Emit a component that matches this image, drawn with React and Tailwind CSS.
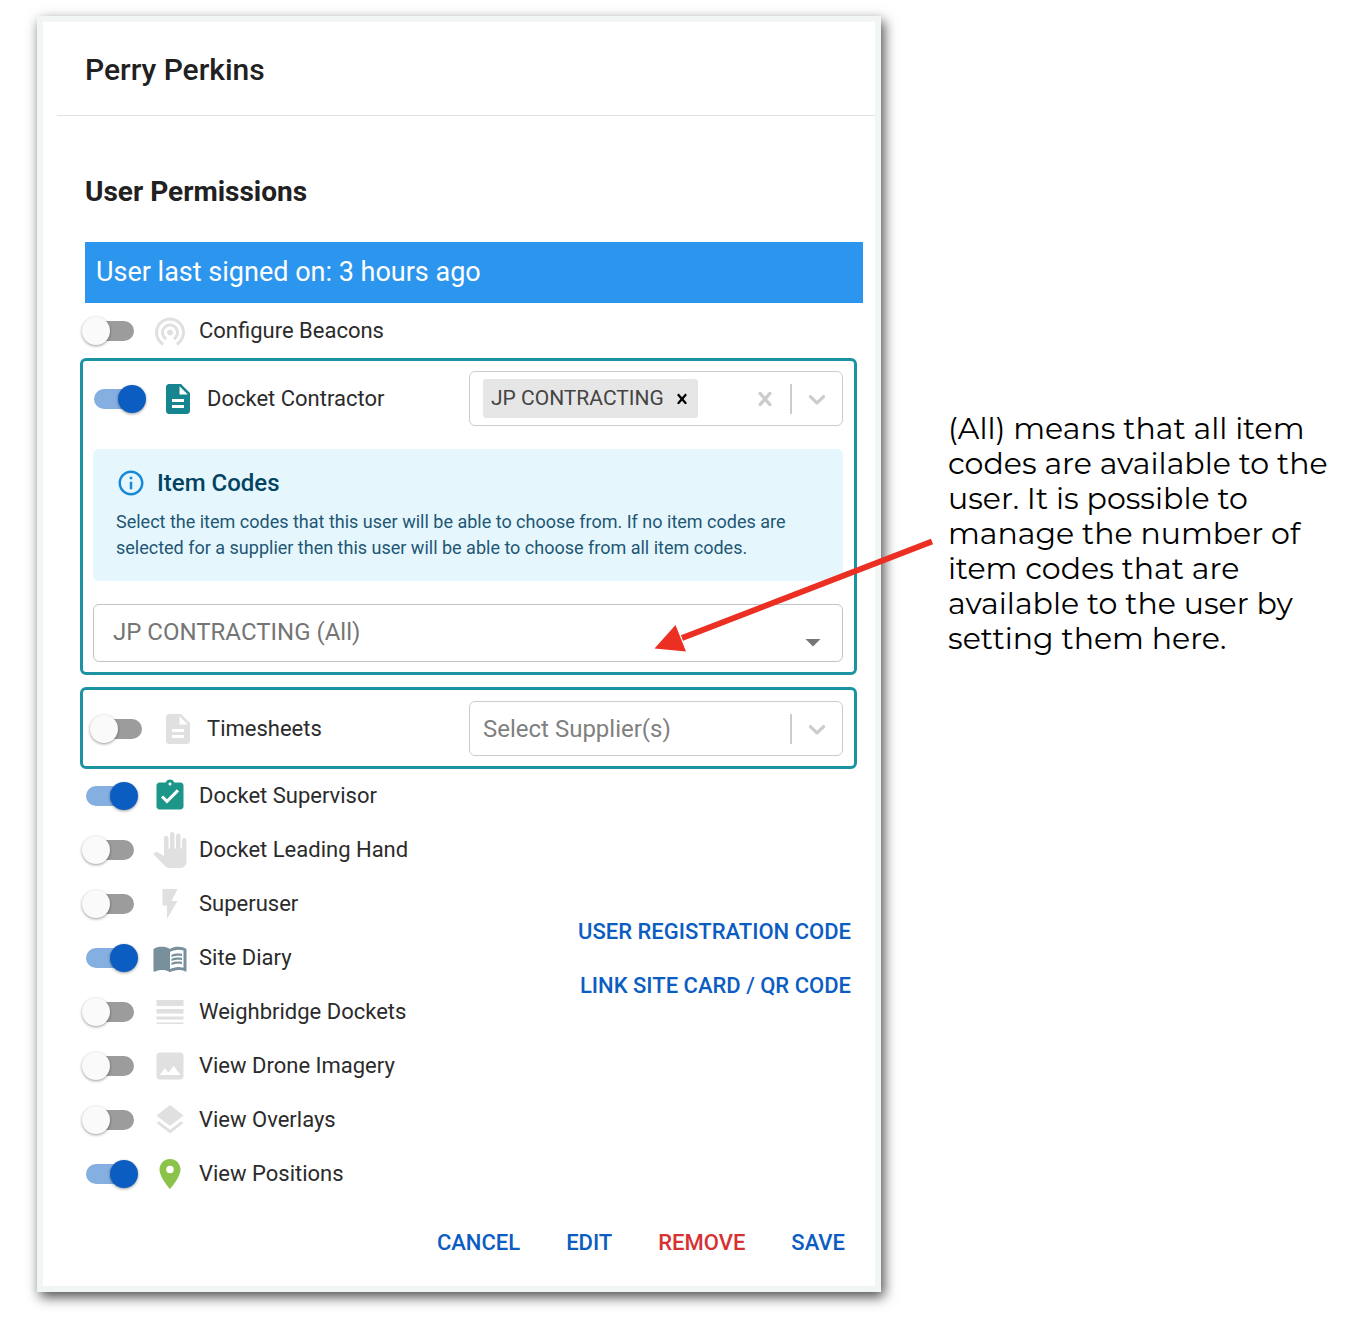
import { useState } from "react";
import {
  MdArrowDropDown,
  MdAssignmentTurnedIn,
  MdDescription,
  MdFlashOn,
  MdImage,
  MdInfoOutline,
  MdLayers,
  MdLineWeight,
  MdMenuBook,
  MdPanTool,
  MdPlace,
  MdWifiTethering,
} from "react-icons/md";

const permissions = [
  {
    id: "supervisor",
    label: "Docket Supervisor",
    icon: MdAssignmentTurnedIn,
    color: "text-[#1c9688]",
  },
  { id: "leadingHand", label: "Docket Leading Hand", icon: MdPanTool },
  { id: "superuser", label: "Superuser", icon: MdFlashOn },
  {
    id: "siteDiary",
    label: "Site Diary",
    icon: MdMenuBook,
    color: "text-[#78909c]",
  },
  { id: "weighbridge", label: "Weighbridge Dockets", icon: MdLineWeight },
  { id: "drone", label: "View Drone Imagery", icon: MdImage },
  { id: "overlays", label: "View Overlays", icon: MdLayers },
  {
    id: "positions",
    label: "View Positions",
    icon: MdPlace,
    color: "text-[#8bc34a]",
  },
];

const PermissionToggle = ({ id, label, icon: Icon, color, checked, onChange }) => (
  <div className="flex items-center">
    <input
      id={id}
      type="checkbox"
      role="switch"
      checked={checked}
      onChange={() => onChange(id)}
      className="relative h-5 w-12 shrink-0 cursor-pointer appearance-none rounded-full bg-[#9c9c9c] before:absolute before:-top-1 before:-left-1 before:size-7 before:rounded-full before:bg-[#fafafa] before:shadow-[0_1px_3px_rgba(0,0,0,0.4)] checked:bg-[#85aee1] checked:before:left-6 checked:before:bg-[#0b5dc2]"
    />
    <Icon
      className={`ml-[18px] size-9 shrink-0 ${checked && color ? color : "text-[#e0e0e0]"}`}
    />
    <label
      htmlFor={id}
      className="ml-[11px] cursor-pointer text-[22px] leading-7 whitespace-nowrap text-[#2b2b2b]"
    >
      {label}
    </label>
  </div>
);

const CrossIcon = ({ className }) => (
  <svg viewBox="0 0 20 20" fill="currentColor" className={className}>
    <path d="M14.348 14.849c-0.469 0.469-1.229 0.469-1.697 0l-2.651-3.030-2.651 3.029c-0.469 0.469-1.229 0.469-1.697 0-0.469-0.469-0.469-1.229 0-1.697l2.758-3.15-2.759-3.152c-0.469-0.469-0.469-1.228 0-1.697s1.228-0.469 1.697 0l2.652 3.031 2.651-3.031c0.469-0.469 1.228-0.469 1.697 0s0.469 1.229 0 1.697l-2.758 3.152 2.758 3.15c0.469 0.469 0.469 1.229 0 1.698z" />
  </svg>
);

const ChevronIcon = () => (
  <svg viewBox="0 0 20 20" fill="currentColor" className="size-7">
    <path d="M4.516 7.548c0.436-0.446 1.043-0.481 1.576 0l3.908 3.747 3.908-3.747c0.533-0.481 1.141-0.446 1.574 0 0.436 0.445 0.408 1.197 0 1.615-0.406 0.418-4.695 4.502-4.695 4.502-0.217 0.223-0.502 0.335-0.787 0.335s-0.57-0.112-0.789-0.335c0 0-4.287-4.084-4.695-4.502s-0.436-1.17 0-1.615z" />
  </svg>
);

const SupplierSelect = ({ label, values, onChange }) => (
  <div className="flex h-[55px] w-[374px] items-center rounded-md border border-[#cccccc] pr-[11px] pl-[13px] text-[#cccccc]">
    {values.map((value) => (
      <span
        key={value}
        className="flex h-[39px] shrink-0 items-center rounded-[3px] bg-[#e6e6e6] pl-2 text-[21px] text-[#444444]"
      >
        {value}
        <button
          type="button"
          aria-label={`Remove ${value}`}
          onClick={() => onChange(values.filter((v) => v !== value))}
          className="ml-2 pr-1.5 text-black"
        >
          <CrossIcon className="size-5" />
        </button>
      </span>
    ))}
    <input
      type="text"
      aria-label={label}
      placeholder={values.length ? "" : "Select Supplier(s)"}
      className="min-w-0 flex-1 text-2xl text-[#333333] outline-none placeholder:text-[#808080]"
    />
    {values.length > 0 && (
      <button type="button" aria-label="Clear" onClick={() => onChange([])}>
        <CrossIcon className="size-7" />
      </button>
    )}
    <span className="mx-[11px] h-[30px] w-0.5 bg-[#cccccc]" />
    <button type="button" aria-label="Open suppliers">
      <ChevronIcon />
    </button>
  </div>
);

const App = () => {
  const [enabled, setEnabled] = useState({
    contractor: true,
    supervisor: true,
    siteDiary: true,
    positions: true,
  });
  const [contractors, setContractors] = useState(["JP CONTRACTING"]);
  const [suppliers, setSuppliers] = useState([]);

  const toggle = (id) => setEnabled((prev) => ({ ...prev, [id]: !prev[id] }));

  return (
    <div className="flex items-start gap-[67px] bg-white pt-4 pr-4 pb-12 pl-[37px] font-[Roboto,sans-serif]">
      <main className="min-w-0 flex-1 border-6 border-[#f1f6f5] bg-white shadow-[3px_5px_12px_rgba(0,0,0,0.7)]">
        <header className="ml-3.5 border-b border-[#e2e2e2] pt-7 pb-[26px] pl-7">
          <h1 className="text-[30px] leading-[39px] font-medium text-[#212121]">
            Perry Perkins
          </h1>
        </header>

        <section className="pt-14">
          <h2 className="pl-[42px] text-[28px] leading-10 font-bold text-[#212121]">
            User Permissions
          </h2>
          <div className="mt-[30px] mr-3 ml-[42px] bg-[#2c96ef] px-[11px] py-3 text-[27px] leading-[37px] text-white">
            User last signed on: 3 hours ago
          </div>

          <div className="pr-[18px] pl-[37px]">
            <div className="flex h-[55px] items-center pl-1.5">
              <PermissionToggle
                id="beacons"
                label="Configure Beacons"
                icon={MdWifiTethering}
                checked={!!enabled.beacons}
                onChange={toggle}
              />
            </div>

            <div className="rounded-md border-3 border-[#1c93a3] p-2.5 pr-[11px]">
              <div className="flex items-center justify-between pl-px">
                <PermissionToggle
                  id="contractor"
                  label="Docket Contractor"
                  icon={MdDescription}
                  color="text-[#17858f]"
                  checked={!!enabled.contractor}
                  onChange={toggle}
                />
                <SupplierSelect
                  label="Docket contractors"
                  values={contractors}
                  onChange={setContractors}
                />
              </div>

              <div className="mt-[23px] rounded-md bg-[#e5f6fd] px-[23px] pt-4 pb-5">
                <div className="flex items-center gap-[11px]">
                  <MdInfoOutline className="size-[30px] text-[#1688d8]" />
                  <h3 className="text-2xl leading-9 font-medium text-[#014361]">
                    Item Codes
                  </h3>
                </div>
                <p className="mt-2 text-lg leading-[26px] text-[#1e5674]">
                  Select the item codes that this user will be able to choose
                  from. If no item codes are selected for a supplier then this
                  user will be able to choose from all item codes.
                </p>
              </div>

              <div className="relative mt-[23px]">
                <select
                  aria-label="Item codes"
                  className="block h-[58px] w-full appearance-none rounded-md border border-[#c4c4c4] pr-12 pb-0.5 pl-[19px] text-2xl text-[#757575]"
                >
                  <option>JP CONTRACTING (All)</option>
                </select>
                <MdArrowDropDown className="pointer-events-none absolute right-3 bottom-0.5 size-9 text-[#757575]" />
              </div>
            </div>

            <div className="mt-3 flex items-center justify-between rounded-md border-3 border-[#1c93a3] px-[11px] pt-[11px] pb-2.5">
              <PermissionToggle
                id="timesheets"
                label="Timesheets"
                icon={MdDescription}
                color="text-[#17858f]"
                checked={!!enabled.timesheets}
                onChange={toggle}
              />
              <SupplierSelect
                label="Timesheet suppliers"
                values={suppliers}
                onChange={setSuppliers}
              />
            </div>

            <div className="flex justify-between px-1.5">
              <ul>
                {permissions.map((permission) => (
                  <li key={permission.id} className="flex h-[54px] items-center">
                    <PermissionToggle
                      {...permission}
                      checked={!!enabled[permission.id]}
                      onChange={toggle}
                    />
                  </li>
                ))}
              </ul>
              <div className="flex flex-col items-end pt-[135px] text-[22px] font-medium text-[#0b5dc2]">
                <button type="button" className="h-[54px]">
                  USER REGISTRATION CODE
                </button>
                <button type="button" className="h-[54px]">
                  LINK SITE CARD / QR CODE
                </button>
              </div>
            </div>
          </div>
        </section>

        <footer className="flex justify-end gap-[46px] pt-6 pr-[30px] pb-[25px] text-[22px] leading-9 font-medium text-[#0b5dc2]">
          <button type="button">CANCEL</button>
          <button type="button">EDIT</button>
          <button type="button" className="text-[#d63232]">
            REMOVE
          </button>
          <button type="button">SAVE</button>
        </footer>
      </main>

      <aside className="relative mt-[395px] w-[390px] shrink-0">
        <p className="font-[Montserrat,sans-serif] text-[30px] leading-[35px] text-black">
          (All) means that all item
          <br />
          codes are available to the
          <br />
          user. It is possible to
          <br />
          manage the number of
          <br />
          item codes that are
          <br />
          available to the user by
          <br />
          setting them here.
        </p>
        <svg
          viewBox="0 0 280 116"
          className="pointer-events-none absolute top-[127px] right-full mr-[14px] h-[116px] w-[280px]"
        >
          <path d="M278 3.500 28 100" stroke="#eb2f23" strokeWidth="6" />
          <path d="M0.500 110.500 21.500 87 32 113.500z" fill="#eb2f23" />
        </svg>
      </aside>
    </div>
  );
};

export default App;
